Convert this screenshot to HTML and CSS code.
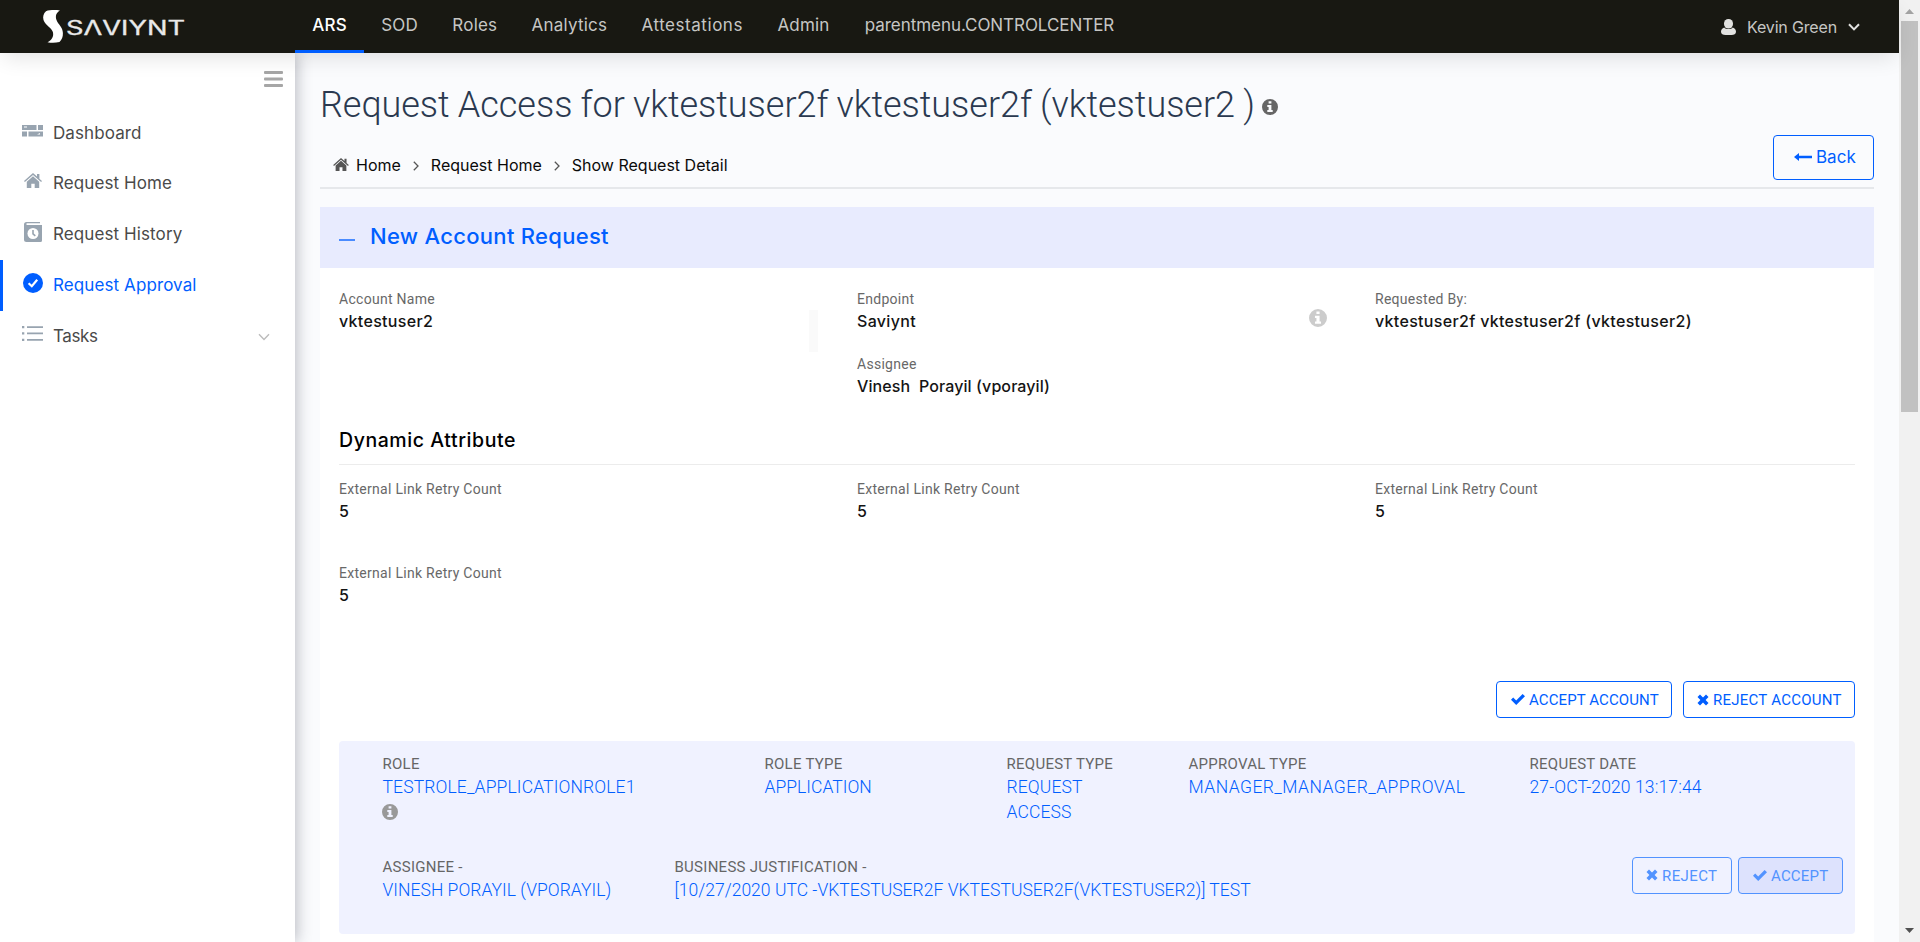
FILE: index.html
```html
<!DOCTYPE html>
<html lang="en">
<head>
<meta charset="utf-8">
<title>Request Access</title>
<link rel="stylesheet" href="styles.css">
</head>
<body>
<svg class="defs" width="0" height="0">
  <symbol id="i-info" viewBox="0 0 16 16"><path fill-rule="evenodd" d="M8 0a8 8 0 1 0 0 16A8 8 0 0 0 8 0ZM6.6 2.3h2.8v2.2H6.6ZM5.3 6h4.1v5h1.3v2H5.3v-2h1.3V8H5.3Z"/></symbol>
  <symbol id="i-home" viewBox="0 0 18 15"><path d="M9 0 13 3.6V1h2.4v4.8L18 8.1l-.9 1L9 1.9.9 9.1 0 8.1Z"/><path d="M9 3.2 15.2 8.7V15H10.7v-4.2H7.3V15H2.8V8.7Z"/></symbol>
  <symbol id="i-check" viewBox="0 0 14 11"><path d="M0 5.8 2.2 3.6 5.2 6.4 11.6 0 14 2.3 5.2 11Z"/></symbol>
  <symbol id="i-x" viewBox="0 0 12 12"><path d="M3 .5 6 3.4 9 .5 11.5 3 8.6 6l2.900 3L9 11.500 6 8.600 3 11.500.5 9l2.900-3L.5 3Z"/></symbol>
  <symbol id="i-down" viewBox="0 0 12 8"><path d="M1 1.2 6 6.4l5-5.200" fill="none" stroke="currentColor" stroke-width="var(--sw, 2)"/></symbol>
  <symbol id="i-right" viewBox="0 0 6 10"><path d="M.8.8 5 5 .8 9.2" fill="none" stroke="currentColor" stroke-width="1.3"/></symbol>
</svg>

<div class="screen">
<div class="app">
  <header class="topbar">
    <svg class="logo" width="145" height="36" viewBox="0 0 145 36">
      <path d="M4 2.2C7.500 1 13 .8 18 1.500 14.500 3.600 13 6.500 14.500 11c1.800 4.600 6.200 7 6.400 13C21 27.800 20 30.500 17.500 33 13.500 34 9 34 5.500 33.200 9.500 31.200 11.800 28 11 23.500 10.200 19 3.500 16.500 1.500 11 .6 7.500 1.500 4.400 4 2.200Z"/>
      <text x="24" y="25.800" textLength="119" lengthAdjust="spacingAndGlyphs">SΛVIYNT</text>
    </svg>
    <nav class="menu">
      <a class="tab active">ARS</a><a class="tab">SOD</a><a class="tab">Roles</a><a class="tab">Analytics</a><a class="tab wide">Attestations</a><a class="tab">Admin</a><a class="tab last">parentmenu.CONTROLCENTER</a>
    </nav>
    <div class="user">
      <svg width="15" height="16" viewBox="0 0 15 16"><rect x="3" width="9" height="9.500" rx="4.400"/><path d="M3.300 8.500C4.500 10.600 10.500 10.600 11.700 8.500 14 9.200 15 10.900 15 12.700 15 15 13 16 10.500 16h-6C2 16 0 15 0 12.700 0 10.900 1 9.200 3.300 8.500Z"/></svg>
      <span>Kevin Green</span>
      <svg class="caret" width="12" height="8"><use href="#i-down"/></svg>
    </div>
  </header>

  <div class="body">
    <aside class="sidebar">
      <svg class="burger" width="19" height="17" viewBox="0 0 19 17"><rect y="0" width="19" height="3" rx="1"/><rect y="6.500" width="19" height="3" rx="1"/><rect y="13" width="19" height="3" rx="1"/></svg>
      <a class="item first">
        <span class="ico"><svg width="21" height="12" viewBox="0 0 21 12"><path d="M0 0h14.500v5H0ZM16 0h5v5h-5ZM0 6.500h5v5H0ZM6.500 6.500H21v5H6.500Z"/><path class="cut" d="M2 1.500h3v1H2ZM15 9.500l3-1.500v1.500Z"/></svg></span>
        <span>Dashboard</span></a>
      <a class="item"><span class="ico"><svg width="18" height="15"><use href="#i-home"/></svg></span><span>Request Home</span></a>
      <a class="item">
        <span class="ico"><svg width="18" height="20" viewBox="0 0 18 20"><path d="M2.500 0H16v1.200H3.200a.9.900 0 0 0 0 1.800H18v15.500a1.500 1.500 0 0 1-1.500 1.500h-14A2.500 2.500 0 0 1 0 17.500v-15A2.500 2.500 0 0 1 2.500 0Z"/><circle class="cut" cx="9" cy="11.500" r="5.500"/><path class="line" d="M9 8v3.800l2.300 2"/></svg></span>
        <span>Request History</span></a>
      <a class="item active">
        <span class="ico"><svg width="20" height="20" viewBox="0 0 20 20"><circle cx="10" cy="10" r="10"/><path class="tick" d="M5.600 10.200 8.800 13.200 14.200 6.800"/></svg></span>
        <span>Request Approval</span></a>
      <a class="item tasks">
        <span class="ico"><svg width="21" height="15" viewBox="0 0 21 15"><path d="M0 0h2.300v2.300H0ZM5 .2h16v1.700H5ZM0 6.300h2.300v2.300H0ZM5 6.600h16v1.700H5ZM0 12.700h2.300V15H0ZM5 13h16v1.700H5Z"/></svg></span>
        <span>Tasks</span>
        <svg class="expand" width="12" height="8"><use href="#i-down"/></svg></a>
    </aside>

    <main class="main">
      <h1 class="title"><span>Request Access for vktestuser2f vktestuser2f (vktestuser2 )</span><svg width="16" height="16"><use href="#i-info"/></svg></h1>
      <div class="crumbrow">
        <div class="crumbs">
          <svg class="chome" width="16" height="13"><use href="#i-home"/></svg><span>Home</span>
          <svg class="sep" width="6" height="10"><use href="#i-right"/></svg><span>Request Home</span>
          <svg class="sep" width="6" height="10"><use href="#i-right"/></svg><span>Show Request Detail</span>
        </div>
        <a class="back"><svg width="18" height="8" viewBox="0 0 18 8"><path d="M0 4 5 0v2.700h13v2.600H5V8Z"/></svg><span>Back</span></a>
      </div>

      <section class="panel">
        <header class="panelhead"><i class="minus"></i><h2>New Account Request</h2></header>
        <div class="content">
          <div class="fields">
            <div class="field"><label>Account Name</label><b>vktestuser2</b><i class="stub"></i></div>
            <div class="field"><label>Endpoint</label><b>Saviynt</b><svg class="finfo" width="18" height="18"><use href="#i-info"/></svg></div>
            <div class="field"><label>Requested By:</label><b>vktestuser2f vktestuser2f (vktestuser2)</b></div>
            <div class="field second"><label>Assignee</label><b class="tight">Vinesh&nbsp; Porayil (vporayil)</b></div>
          </div>
          <h3>Dynamic Attribute</h3>
          <div class="fields attrs">
            <div class="field"><label>External Link Retry Count</label><b>5</b></div>
            <div class="field"><label>External Link Retry Count</label><b>5</b></div>
            <div class="field"><label>External Link Retry Count</label><b>5</b></div>
            <div class="field"><label>External Link Retry Count</label><b>5</b></div>
          </div>
          <div class="actions">
            <a class="btn"><svg width="14" height="11"><use href="#i-check"/></svg><span class="ls1">ACCEPT ACCOUNT</span></a>
            <a class="btn rej"><svg width="12" height="12"><use href="#i-x"/></svg><span>REJECT ACCOUNT</span></a>
          </div>
          <div class="card">
            <div class="row one">
              <div><label>ROLE</label><p>TESTROLE_APPLICATIONROLE1</p><svg class="rinfo" width="16" height="16"><use href="#i-info"/></svg></div>
              <div><label>ROLE TYPE</label><p class="ls0">APPLICATION</p></div>
              <div><label>REQUEST TYPE</label><p>REQUEST<br>ACCESS</p></div>
              <div><label>APPROVAL TYPE</label><p class="loose">MANAGER_MANAGER_APPROVAL</p></div>
              <div><label>REQUEST DATE</label><p>27-OCT-2020 13:17:44</p></div>
            </div>
            <div class="row two">
              <div><label>ASSIGNEE -</label><p class="ls0">VINESH PORAYIL (VPORAYIL)</p></div>
              <div><label>BUSINESS JUSTIFICATION -</label><p class="ls0">[10/27/2020 UTC -VKTESTUSER2F VKTESTUSER2F(VKTESTUSER2)] TEST</p></div>
              <div class="rowbtns">
                <a class="btn soft"><svg width="12" height="12"><use href="#i-x"/></svg><span>REJECT</span></a>
                <a class="btn soft filled"><svg width="14" height="11"><use href="#i-check"/></svg><span>ACCEPT</span></a>
              </div>
            </div>
          </div>
        </div>
      </section>
    </main>
  </div>
</div>
<div class="scroll">
  <svg class="up" width="9" height="5" viewBox="0 0 9 5"><path d="M0 5 4.500 0 9 5Z"/></svg>
  <i class="thumb"></i>
  <svg class="dn" width="9" height="5" viewBox="0 0 9 5"><path d="M0 0 4.500 5 9 0Z"/></svg>
</div>
</div>
</body>
</html>
```

FILE: styles.css
```css
* { box-sizing: border-box; }
body { margin: 0; overflow: hidden; font-family: Roboto, "Liberation Sans", sans-serif; background: #fafbfd; }
svg { fill: currentColor; flex: none; display: block; }
.defs { display: none; }
h1, h2, h3, p { margin: 0; font-weight: 400; }
label, b, p { display: block; white-space: nowrap; }
a, span { white-space: nowrap; }

.screen { display: flex; width: 1920px; height: 942px; overflow: hidden; }
.app { width: 1899px; flex: none; display: flex; flex-direction: column; }

.topbar { height: 53px; flex: none; background: #181812; color: #c6c6c4; display: flex; font-family: Inter, Roboto, sans-serif; box-shadow: 0 8px 22px -4px rgba(0,0,0,.12); position: relative; z-index: 2; }
.logo { margin: 9px 0 0 42px; width: 145px; color: #fff; }
.logo text { font: 400 19.5px Inter, Roboto, sans-serif; fill: #e9e9e9; stroke: #e9e9e9; stroke-width: .3px; }
.menu { display: flex; margin-left: 108px; font-size: 17px; line-height: 51px; letter-spacing: .2px; }
.tab { height: 53px; padding: 0 17.2px; border-bottom: 3px solid transparent; }
.tab.active { color: #fff; width: 69px; border-bottom-color: #005eff; font-weight: 500; letter-spacing: .3px; }
.tab.wide { letter-spacing: .55px; }
.tab.last { letter-spacing: -.05px; padding-left: 18px; }
.user { margin-left: auto; margin-right: 39px; padding-top: 1px; display: flex; align-items: center; font-size: 16px; letter-spacing: -.16px; }
.user svg { color: #e2e2e0; }
.user span { margin: 0 11px; }
.user .caret { margin-top: -1px; }

.body { flex: 1; display: flex; min-height: 0; }
.sidebar { width: 295px; flex: none; background: #fff; color: #4a4a4a; box-shadow: 2px 0 14px rgba(40,44,60,.3); position: relative; z-index: 1; font: 17px Inter, Roboto, sans-serif; letter-spacing: .1px; display: flex; flex-direction: column; }
.burger { margin: 18px 0 19px 264px; color: #a6a6a6; }
.item { height: 51px; display: flex; align-items: center; border-left: 3px solid transparent; padding: 0 0 2px 19px; }
.item.first { padding-bottom: 0; }
.ico { width: 21px; height: 22px; margin: -4px 10px 0 0; display: flex; align-items: center; justify-content: center; color: #98a4b0; }
.cut { fill: #fff; }
.line { fill: none; stroke: #98a4b0; stroke-width: 1.6; }
.tick { fill: none; stroke: #fff; stroke-width: 2.2; }
.item.active { color: #005eff; border-left-color: #005eff; }
.item.active .ico { color: #005eff; }
.item.tasks { letter-spacing: -.4px; }
.expand { margin: 2px 25px 0 auto; color: #bcbcbc; --sw: 1.4; }

.main { flex: 1; min-width: 0; padding: 28px 25px 0; display: flex; flex-direction: column; }
.title { display: flex; align-items: center; height: 48px; font-size: 36px; font-weight: 300; letter-spacing: -.03px; word-spacing: -.5px; color: #2a3950; }
.title svg { color: #666; margin: 3px 0 0 7px; }
.crumbrow { height: 60px; border-bottom: 2px solid #e6e8eb; display: flex; justify-content: space-between; align-items: flex-start; }
.crumbs { margin: 24px 0 0 13px; height: 24px; display: flex; align-items: center; font: 16px Inter, Roboto, sans-serif; color: #0a0a0a; }
.chome { color: #555; margin: -2px 7px 0 0; }
.sep { color: #555; margin: 1px 12px 0; }
.back { margin-top: 6px; width: 101px; height: 45px; border: 1px solid #005eff; border-radius: 4px; color: #005eff; display: flex; align-items: center; padding: 0 0 2px 20px; gap: 4px; font: 17px Inter, Roboto, sans-serif; }

.panel { margin-top: 18px; flex: 1; background: #fff; display: flex; flex-direction: column; }
.panelhead { height: 61px; background: #e8ebfe; display: flex; align-items: center; padding: 0 0 3px 19px; }
.minus { width: 16px; height: 2px; background: #4a8bff; margin: 7px 15px 0 0; }
.panelhead h2 { font: 500 22px Inter, Roboto, sans-serif; letter-spacing: .3px; color: #005eff; }
.content { padding: 20px 19px 0; display: flex; flex-direction: column; }
.fields { display: grid; grid-template-columns: 518px 518px 480px; row-gap: 19px; }
.field { height: 46px; position: relative; }
.field label { font-size: 14px; line-height: 22px; letter-spacing: .28px; color: #686868; }
.field b { font: 500 16px/22px Inter, Roboto, sans-serif; letter-spacing: .32px; color: #141414; }
.field b.tight { letter-spacing: .1px; }
.field.second { grid-column: 2; }
.finfo { position: absolute; left: 452px; top: 21px; color: #ccc; }
.stub { position: absolute; left: 470px; top: 22px; width: 9px; height: 42px; background: #fafafa; }
h3 { margin-top: 26px; height: 40px; border-bottom: 1px solid #ececec; font: 500 19.5px/30px Inter, Roboto, sans-serif; letter-spacing: .57px; color: #000; }
.attrs { margin-top: 13px; row-gap: 38px; }

.actions { margin-top: 73px; display: flex; justify-content: flex-end; gap: 11px; }
.btn { height: 37px; width: 176px; border: 1px solid #005eff; border-radius: 4px; color: #005eff; display: flex; align-items: center; padding-left: 14px; gap: 4px; font-size: 15px; letter-spacing: .25px; }
.btn span { padding-top: 1px; }
.btn .ls1 { letter-spacing: .1px; }
.btn.rej { width: 172px; padding-left: 13px; }

.card { margin-top: 23px; height: 193px; border-radius: 4px; background: #f0f2ff; padding: 11px 0 0 43.5px; }
.row { display: grid; }
.one { grid-template-columns: 382px 242px 182px 341px 1fr; height: 73px; }
.one label { padding-top: 1px; }
.two { margin-top: 31px; grid-template-columns: 292px 1fr auto; }
.card label { height: 23px; font-size: 15px; line-height: 23px; letter-spacing: .27px; color: #666; }
.card p { font-size: 17.5px; font-weight: 300; line-height: 25px; letter-spacing: .13px; color: #005eff; }
.card p.ls0 { letter-spacing: .03px; }
.card p.loose { letter-spacing: .45px; }
.two p { margin-top: -1px; }
.rinfo { color: #999; margin: 4px 0 0 -1px; }
.rowbtns { display: flex; gap: 6px; margin: 1px 12px 0 0; }
.btn.soft { width: 100px; padding: 0 0 1px 13px; border-color: #5293ff; color: #5293ff; letter-spacing: .4px; }
.btn.filled { width: 105px; padding-left: 14px; background: #dde2fd; letter-spacing: .2px; }

.scroll { width: 21px; flex: none; background: #f1f1f1; display: flex; flex-direction: column; align-items: center; }
.up { margin: 9px 0 7px; color: #a3a3a3; }
.thumb { width: 17px; height: 391px; background: #c1c1c1; }
.dn { margin: auto 0 9px; color: #505050; }
```
